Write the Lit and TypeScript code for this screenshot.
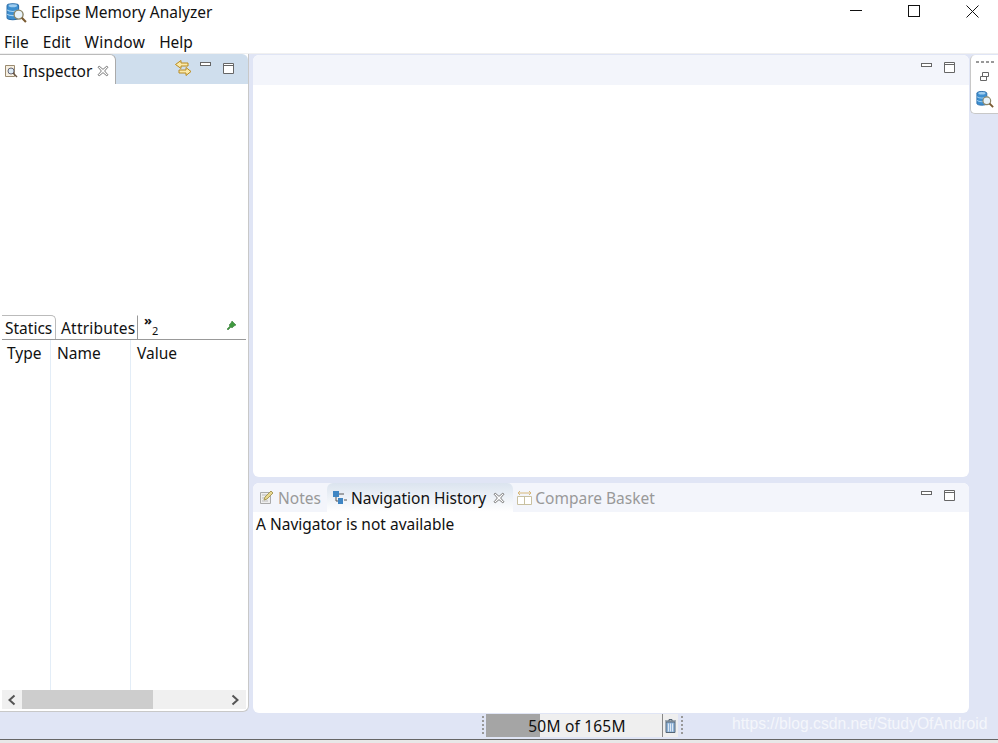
import { LitElement, html, css } from 'lit';
import { customElement } from 'lit/decorators.js';

const minIcon = html`<svg width="12" height="10" viewBox="0 0 12 10"><rect x="1.500" y="2.500" width="10" height="3" fill="#fff" stroke="#666"/></svg>`;
const maxIcon = html`<svg width="12" height="12" viewBox="0 0 12 12"><path d="M1.500 1.500h10v10h-10zM1.500 3.500h10" fill="#fff" stroke="#666"/></svg>`;
const closeTab = html`<svg width="12" height="12" viewBox="0 0 11 11"><path d="M1 2l1-1 3.500 3L9 1l1 1-3 3.500L10 9l-1 1-3.500-3L2 10 1 9l3-3.500z" fill="#fff" stroke="#777" stroke-width=".9"/></svg>`;

const dbIcon = (size: number) => html`<svg width=${size} height=${size} viewBox="0 0 20 20">
  <path d="M1 3.500C1 1 12 1 12 3.500V15C12 17.500 1 17.500 1 15z" fill="#3d8fd0" stroke="#2a6ca8"/>
  <path d="M1 7.500C3 9.500 10 9.500 12 7.500M1 11.500C3 13.500 10 13.500 12 11.500" fill="none" stroke="#a9d3f0"/>
  <ellipse cx="6.500" cy="3.500" rx="4" ry="1.400" fill="#9fcdf0"/>
  <circle cx="12" cy="12" r="4.300" fill="#e8f3fa" stroke="#8a8466" stroke-width="1.300"/>
  <path d="M15 15l4 4" stroke="#7a5a30" stroke-width="2"/>
</svg>`;

@customElement('app-root')
export class AppRoot extends LitElement {
  static styles = css`
    :host {
      display: flex;
      flex-direction: column;
      width: 998px;
      height: 743px;
      overflow: hidden;
      background: #fff;
      font-family: 'Noto Sans', 'Open Sans', sans-serif;
      font-size: 15.500px;
      color: #111;
    }
    svg { display: block; flex: none; }
    .title {
      height: 30px;
      box-sizing: border-box;
      display: flex;
      align-items: center;
      padding: 0 0 6px 6px;
      gap: 4px;
      flex: none;
    }
    .win { margin-left: auto; display: flex; align-self: flex-start; gap: 46px; padding: 5px 19px 0 0; }
    .menu {
      height: 24px;
      display: flex;
      align-items: center;
      gap: 14px;
      padding-left: 4px;
      flex: none;
      border-bottom: 1px solid #f0f0f0;
      box-sizing: border-box;
    }
    .menu .wide { letter-spacing: .3px; }
    .body {
      flex: 1;
      min-height: 0;
      display: flex;
      background: #e0e5f5;
    }
    .left {
      width: 249px;
      height: 658px;
      background: #fff;
      border-right: 1px solid #c8c8c8;
      border-bottom: 1px solid #c8c8c8;
      border-bottom-right-radius: 6px;
      display: flex;
      flex-direction: column;
      flex: none;
      box-sizing: border-box;
    }
    .lhead {
      height: 30px;
      background: #cfdeed;
      display: flex;
      align-items: flex-end;
      border-top-right-radius: 6px;
      flex: none;
    }
    .ltab {
      width: 116px;
      height: 30px;
      box-sizing: border-box;
      background: #fff;
      border-right: 1px solid #aaa;
      border-top: 1px solid #bbb;
      border-top-right-radius: 6px;
      display: flex;
      align-items: center;
      padding: 2px 0 0 4px;
      gap: 5px;
    }
    .ltools { margin-left: auto; display: flex; align-items: flex-start; align-self: flex-start; padding: 6px 15px 0 0; }
    .ltools svg:nth-child(2) { margin: 0 11px 0 7px; }
    .ltools svg:nth-child(3) { margin: 2px -1px 0 0; }
    .lempty { height: 229px; flex: none; }
    .stabs {
      height: 24px;
      padding-top: 2px;
      margin: 0 2px;
      border-bottom: 1px solid #999;
      display: flex;
      align-items: stretch;
      flex: none;
    }
    .stab { box-sizing: border-box; padding: 0 0 0 3px; display: flex; align-items: center; flex: none; border-top: 1px solid transparent; }
    .stab.on { border-top-color: #bbb; border-right: 1px solid #bbb; border-top-right-radius: 5px; width: 54px; }
    .stab.attr { border-right: 1px solid #999; width: 82px; padding-left: 5px; letter-spacing: .2px; }
    .more { position: relative; width: 30px; font-size: 11px; flex: none; }
    .more span { position: absolute; left: 14px; top: 8px; }
    .more b { position: absolute; left: 6px; top: -4px; font-weight: 700; font-size: 13px; }
    .pin { margin: 5px 9px 0 auto; }
    .cols {
      flex: 1;
      display: grid;
      grid-template-columns: 49px 80px 1fr;
      margin: 0 2px;
    }
    .cols div { padding: 2px 0 0 6px; border-right: 1px solid #e3edf7; }
    .cols div:first-child { padding-left: 5px; }
    .cols div:last-child { border-right: 0; }
    .hbar {
      height: 19px;
      margin: 0 2px 2px;
      background: #f0f0f0;
      display: flex;
      align-items: center;
      flex: none;
    }
    .thumb { width: 131px; height: 19px; background: #cdcdcd; margin-left: 20px; }
    .hbar svg:last-child { margin-left: auto; margin-right: 6px; }
    .hbar svg:first-child { margin-left: 5px; margin-right: -15px; }
    .center {
      width: 716px;
      margin-left: 4px;
      padding-top: 1px;
      display: flex;
      flex-direction: column;
      gap: 6px;
      flex: none;
    }
    .panel { background: #fff; border-radius: 6px; display: flex; flex-direction: column; }
    .top { height: 422px; flex: none; }
    .bottom { height: 230px; flex: none; }
    .phead {
      height: 30px;
      background: #f3f5fb;
      border-radius: 6px 6px 0 0;
      display: flex;
      justify-content: flex-end;
      align-items: flex-start;
      gap: 11px;
      padding: 6px 14px 0 0;
      box-sizing: border-box;
      flex: none;
    }
    .bhead { justify-content: flex-start; padding: 0; align-items: stretch; height: 29px; gap: 0; }
    .btab { display: flex; align-items: center; gap: 4px; padding: 0 6px 0 6px; color: #999; flex: none; }
    .btab.on {
      color: #111;
      background: linear-gradient(#dbe4ef, #fff);
      border-radius: 6px 6px 0 0;
      padding: 0 8px 0 6px;
      gap: 3px;
    }
    .btab.on svg:last-child { margin-left: 4px; }
    .btab.last { padding-left: 4px; gap: 2px; }
    .btools { margin-left: auto; display: flex; gap: 11px; padding: 6px 14px 0 0; align-items: flex-start; }
    .msg { padding: 1px 3px 0; }
    .trim {
      width: 28px;
      height: 59px;
      margin: 1px 0 0 1px;
      background: #fff;
      border-left: 1px solid #c8c8c8;
      border-bottom: 1px solid #c8c8c8;
      border-radius: 5px 0 0 5px;
      box-sizing: border-box;
      display: flex;
      flex-direction: column;
      align-items: center;
      padding-top: 6px;
      flex: none;
    }
    .dots { width: 18px; height: 2px; margin-bottom: 8px; background: repeating-linear-gradient(90deg, #999 0 3px, transparent 3px 5px); }
    .tgap { height: 8px; flex: none; }
    .status {
      height: 26px;
      background: #e0e5f5;
      border-bottom: 1px solid #666;
      box-sizing: border-box;
      display: flex;
      align-items: flex-start;
      flex: none;
    }
    .strip { height: 3px; background: #e8e8e8; flex: none; }
    .heap {
      width: 177px;
      height: 23px;
      background: #efefef;
      position: relative;
      border-right: 1px solid #888;
      box-sizing: border-box;
      text-align: center;
      line-height: 25px;
      padding-left: 6px;
      letter-spacing: .2px;
      flex: none;
    }
    .heapfill { position: absolute; left: 0; top: 0; bottom: 0; width: 54px; background: #a5a5a5; }
    .heap span { position: relative; }
    .trash { width: 15px; height: 23px; background: #efefef; display: flex; align-items: center; justify-content: center; flex: none; }
    .grip { width: 2px; height: 20px; margin: 2px 2px 0 482px; background: repeating-linear-gradient(#999 0 2px, transparent 2px 4px); flex: none; }
    .grip.r { margin: 2px 0 0 3px; }
    .wm { margin-left: 49px; color: #f4f6fb; font-family: 'Liberation Sans', sans-serif; font-size: 15.700px; line-height: 20px; white-space: nowrap; }
  `;

  render() {
    return html`
      <div class="title">
        ${dbIcon(21)}
        <span>Eclipse Memory Analyzer</span>
        <div class="win">
          <svg width="12" height="12" viewBox="0 0 12 12"><path d="M0 5.500h12" stroke="#111"/></svg>
          <svg width="12" height="12" viewBox="0 0 12 12"><rect x=".5" y=".5" width="11" height="11" fill="none" stroke="#111"/></svg>
          <svg width="13" height="13" viewBox="0 0 13 13"><path d="M.5.500l12 12M12.500.500l-12 12" stroke="#111"/></svg>
        </div>
      </div>
      <div class="menu"><span>File</span><span>Edit</span><span class="wide">Window</span><span>Help</span></div>
      <div class="body">
        <div class="left">
          <div class="lhead">
            <div class="ltab">
              <svg width="14" height="14" viewBox="0 0 14 14"><path d="M1.500 1.500h9v11h-9z" fill="#f6efe0" stroke="#9a8a70"/><circle cx="7" cy="7" r="3" fill="#dcebf5" stroke="#667"/><path d="M9 9l4 4" stroke="#654" stroke-width="1.500"/></svg>
              <span>Inspector</span>
              ${closeTab}
            </div>
            <div class="ltools">
              <svg width="17" height="17" viewBox="0 0 17 17"><path d="M.5 4.500L6 .5v2.500h7v3H6v2.500z" fill="#fbe9a8" stroke="#b88a1e"/><path d="M16 11.500L11 7.500v2.500H4v3h7v2.500z" fill="#fbe9a8" stroke="#b88a1e"/></svg>
              ${minIcon}
              ${maxIcon}
            </div>
          </div>
          <div class="lempty"></div>
          <div class="stabs">
            <div class="stab on">Statics</div>
            <div class="stab attr">Attributes</div>
            <div class="more"><b>»</b><span>2</span></div>
            <svg class="pin" width="11" height="11" viewBox="0 0 11 11"><path d="M6 1l4 4-2 1-2 2-1-1-3 3-1-1 3-3-1-1 2-2z" fill="#3f9a3f" stroke="#2c6e2c" stroke-width=".5"/></svg>
          </div>
          <div class="cols"><div>Type</div><div>Name</div><div>Value</div></div>
          <div class="hbar">
            <svg width="10" height="12" viewBox="0 0 10 12"><path d="M7.500 1.500L2.500 6l5 4.500" fill="none" stroke="#555" stroke-width="2"/></svg>
            <div class="thumb"></div>
            <svg width="10" height="12" viewBox="0 0 10 12"><path d="M2.500 1.500L7.500 6l-5 4.500" fill="none" stroke="#555" stroke-width="2"/></svg>
          </div>
        </div>
        <div class="center">
          <div class="panel top"><div class="phead">${minIcon}${maxIcon}</div></div>
          <div class="panel bottom">
            <div class="phead bhead">
              <div class="btab">
                <svg width="15" height="15" viewBox="0 0 15 15"><path d="M1.500 2.500h10v11h-10z" fill="#eee" stroke="#aaa"/><path d="M3 5h6M3 8h5M3 11h6" stroke="#bbb"/><path d="M12 1l2 2-6 6-3 1 1-3z" fill="#e8d890" stroke="#a89a5a"/></svg>
                <span>Notes</span>
              </div>
              <div class="btab on">
                <svg width="15" height="15" viewBox="0 0 15 15"><path d="M3 6v5h3M6 4h5" stroke="#555" fill="none"/><rect x="0" y="1" width="6" height="6" fill="#3f86c4"/><rect x="5" y="8" width="5" height="6" fill="#3f86c4"/><path d="M11 10h3" stroke="#555"/></svg>
                <span>Navigation History</span>
                ${closeTab}
              </div>
              <div class="btab last">
                <svg width="16" height="17" viewBox="0 0 16 17"><path d="M.500 7.500h14v8H.500zM7.500 7.500v8" fill="#fff" stroke="#c8c0a0"/><path d="M1 4h13M3 2L1 4l2 2M12 2l2 2-2 2" fill="none" stroke="#d8b878"/></svg>
                <span>Compare Basket</span>
              </div>
              <div class="btools">${minIcon}${maxIcon}</div>
            </div>
            <div class="msg">A Navigator is not available</div>
          </div>
        </div>
        <div class="trim">
          <div class="dots"></div>
          <svg width="11" height="11" viewBox="0 0 11 11"><path d="M3.500 1.500h6v4h-6zM1.500 5.500h6v4h-6z" fill="#fff" stroke="#666"/></svg>
          <div class="tgap"></div>
          ${dbIcon(18)}
        </div>
      </div>
      <div class="status">
        <div class="grip"></div>
        <div class="heap"><div class="heapfill"></div><span>50M of 165M</span></div>
        <div class="trash"><svg width="13" height="16" viewBox="0 0 13 16"><path d="M1 3h11M5 3V1.500h3V3" fill="none" stroke="#567"/><path d="M2 4h9v10.500H2z" fill="#8fb3d8" stroke="#567"/><path d="M4.500 5.500v8M6.500 5.500v8M8.500 5.500v8" stroke="#dfe9f3"/></svg></div>
        <div class="grip r"></div>
        <div class="wm">https://blog.csdn.net/StudyOfAndroid</div>
      </div>
      <div class="strip"></div>
    `;
  }
}
